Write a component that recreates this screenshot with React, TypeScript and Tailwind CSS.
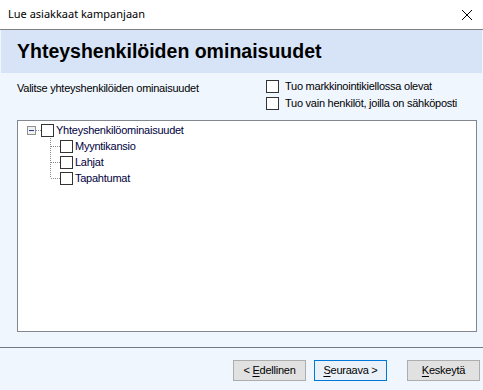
import React from "react";

const T = "text-[11px] tracking-[-0.25px]";

function Box({ className = "" }: { className?: string }) {
  return <div className={"w-[13px] h-[13px] bg-white border border-[#333333] shrink-0 " + className} />;
}

function ChildRow({ label, last }: { label: string; last?: boolean }) {
  return (
    <div className="flex items-center h-4 pl-[32px]">
      <svg width="10" height="16" className="shrink-0">
        <line x1="0.5" y1="0" x2="0.5" y2={last ? 8 : 16} stroke="#8a8a8a" strokeDasharray="1 1" />
        <line x1="1" y1="8.5" x2="10" y2="8.5" stroke="#8a8a8a" strokeDasharray="1 1" />
      </svg>
      <Box />
      <span className={"ml-[2px] leading-4 text-[#000040] " + T}>{label}</span>
    </div>
  );
}

function Btn({ children, primary }: { children: React.ReactNode; primary?: boolean }) {
  return (
    <div
      className={
        "w-[73px] h-[21px] shrink-0 flex items-center justify-center text-black border " +
        T +
        " " +
        (primary ? "border-[#0078d7] bg-[#eaf1f9]" : "border-[#adadad] bg-[#e1e1e1]")
      }
    >
      {children}
    </div>
  );
}

export default function App() {
  return (
    <div
      className="w-[483px] h-[390px] bg-[#eff6fe] flex flex-col overflow-hidden"
      style={{ fontFamily: '"Liberation Sans", Arial, sans-serif' }}
    >
      <div className="h-[30px] bg-white flex items-center justify-between pl-[8px] pr-[10px] border-b border-[#808080] shrink-0">
        <span className="text-[11px] text-black" style={{ fontFamily: '"Noto Sans", sans-serif' }}>
          Lue asiakkaat kampanjaan
        </span>
        <svg width="12" height="12" viewBox="0 0 12 12">
          <path d="M1 1 L11 11 M11 1 L1 11" stroke="#000" strokeWidth="1" />
        </svg>
      </div>
      <div className="h-[43px] mx-[1px] bg-[#d7e4f7] flex items-center pl-[16px] shrink-0">
        <span className="text-[19.5px] font-bold text-black">Yhteyshenkilöiden ominaisuudet</span>
      </div>
      <div className="px-[17px] pt-[7px] flex">
        <div className={"w-[249px] shrink-0 text-black leading-[14px] pt-[1px] " + T}>
          Valitse yhteyshenkilöiden ominaisuudet
        </div>
        <div className="flex flex-col gap-[4px]">
          <div className="flex items-center h-[13px]">
            <Box />
            <span className={"ml-[6px] text-black whitespace-nowrap " + T}>Tuo markkinointikiellossa olevat</span>
          </div>
          <div className="flex items-center h-[13px]">
            <Box />
            <span className={"ml-[6px] text-black whitespace-nowrap " + T}>Tuo vain henkilöt, joilla on sähköposti</span>
          </div>
        </div>
      </div>
      <div className="mx-[17px] mt-[10px] w-[460px] h-[212px] bg-white border border-[#828790] pt-[1px] shrink-0">
        <div className="flex items-center h-4 pl-[9px]">
          <div className="w-[9px] h-[9px] border border-[#919191] bg-[#f0f0f0] flex items-center justify-center shrink-0">
            <div className="w-[5px] h-[1px] bg-[#1c3f8f]" />
          </div>
          <svg width="5" height="16" className="shrink-0">
            <line x1="0" y1="8.5" x2="5" y2="8.5" stroke="#8a8a8a" strokeDasharray="1 1" />
          </svg>
          <Box />
          <span className={"ml-[2px] leading-4 text-[#000040] " + T}>Yhteyshenkilöominaisuudet</span>
        </div>
        <ChildRow label="Myyntikansio" />
        <ChildRow label="Lahjat" />
        <ChildRow label="Tapahtumat" last />
      </div>
      <div className="mt-[15px] h-[1px] bg-[#6f7a86] shrink-0" />
      <div className="flex pt-[12px] pl-[233px]">
        <Btn>
          &lt;&nbsp;<span className="underline underline-offset-2">E</span>dellinen
        </Btn>
        <div className="w-[8px] shrink-0" />
        <Btn primary>
          <span className="underline underline-offset-2">S</span>euraava &gt;
        </Btn>
        <div className="w-[20px] shrink-0" />
        <Btn>
          <span className="underline underline-offset-2">K</span>eskeytä
        </Btn>
      </div>
    </div>
  );
}
